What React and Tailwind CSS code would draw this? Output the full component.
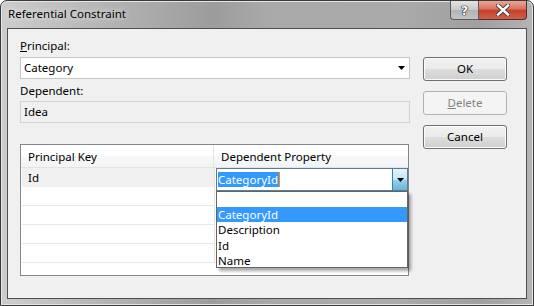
import React from "react";

function Arrow({ className = "" }) {
  return (
    <svg width="7" height="4" viewBox="0 0 7 4" className={className}>
      <path d="M0 0h7L3.5 4z" fill="#000" />
    </svg>
  );
}

function Button({ children, disabled }) {
  return (
    <div
      className={
        disabled
          ? "h-[24px] w-[84px] rounded-[3px] border border-[#adb2b5] bg-[#f4f4f4] text-[#838383] flex items-center justify-center"
          : "h-[24px] w-[84px] rounded-[3px] border border-[#707070] bg-[linear-gradient(to_bottom,#f2f2f2_0%,#ebebeb_48%,#dddddd_52%,#cfcfcf_100%)] flex items-center justify-center shadow-[inset_0_0_0_1px_#fbfbfb]"
      }
    >
      {children}
    </div>
  );
}

export default function App() {
  const rows = [0, 1, 2, 3, 4];
  return (
    <div className="w-[534px] h-[306px] overflow-hidden font-['Noto_Sans',sans-serif] text-[11.5px] leading-[16px] text-black">
      <div className="w-[534px] h-[306px] rounded-t-[7px] border border-[#3a3a3a] bg-[linear-gradient(to_right,#cdcdcd_0%,#b4b4b4_20%,#9c9c9c_40%,#a9a9a9_50%,#aaaaaa_75%,#a0a0a0_90%,#b4b4b4_100%)] flex flex-col shadow-[inset_0_0_0_1px_#e6e6e6]">
        {/* title bar */}
        <div className="h-[27px] flex items-start">
          <div className="pl-[7px] pt-[5px] [text-shadow:0_0_6px_#ffffff]">Referential Constraint</div>
          <div className="ml-auto mr-[6px] flex">
            <div className="w-[29px] h-[19px] rounded-bl-[4px] border border-[#5b5b5b] border-t-0 bg-[linear-gradient(to_bottom,#e3e3e3_0%,#c9c9c9_50%,#b3b3b3_52%,#c4c4c4_100%)] flex items-center justify-center">
              <span className="font-['DejaVu_Sans',sans-serif] font-bold text-[13px] leading-none text-white [text-shadow:0_0_1px_#000,0_0_1px_#000,0_0_1px_#000]">?</span>
            </div>
            <div className="w-[48px] h-[19px] rounded-br-[4px] border border-[#5b2a22] border-t-0 border-l-0 bg-[linear-gradient(to_bottom,#e9a89a_0%,#d9705c_45%,#c4412b_52%,#d0604a_100%)] flex items-center justify-center">
              <svg width="14" height="12" viewBox="0 0 14 12">
                <path d="M2 1.5l10 9M12 1.5l-10 9" stroke="#3b3b3b" strokeWidth="4.2" strokeLinecap="square" />
                <path d="M2 1.5l10 9M12 1.5l-10 9" stroke="#ffffff" strokeWidth="2.4" strokeLinecap="square" />
              </svg>
            </div>
          </div>
        </div>

        {/* client area */}
        <div className="mx-[6px] h-[271px] border border-[#4f4f4f] bg-[#f0f0f0] flex pl-[12px]">
          <div className="w-[390px] flex flex-col pt-[9px]">
            <div>
              <span className="underline">P</span>rincipal:
            </div>
            <div className="mt-[3px] h-[22px] border border-[#c5c5c5] bg-white flex items-center pl-[3px] pr-[4px]">
              <span>Category</span>
              <Arrow className="ml-auto" />
            </div>
            <div className="mt-[4px]">Dependent:</div>
            <div className="mt-[2px] h-[22px] border border-[#d2d2d2] bg-[#f0f0f0] flex items-center pl-[3px]">
              Idea
            </div>

            {/* grid */}
            <div className="relative mt-[21px] w-[389px] h-[132px] border border-[#828790] bg-white">
              <div className="h-[23px] flex border-b border-[#e3e3e3] bg-[linear-gradient(to_bottom,#ffffff_0%,#ffffff_45%,#f6f7f8_55%,#f3f4f5_100%)]">
                <div className="w-[193px] border-r border-[#e5e5e5] pl-[7px] pt-[4px]">Principal Key</div>
                <div className="pl-[7px] pt-[4px]">Dependent Property</div>
              </div>
              {rows.map((r) => (
                <div key={r} className="h-[19px] flex">
                  <div
                    className={
                      r === 0
                        ? "w-[193px] ml-[1px] bg-[#f0f0f0] border-r border-[#e5e5e5] pl-[6px] pt-[2px]"
                        : "w-[193px] ml-[1px] border-b border-[#e8e8e8] border-r border-r-[#e5e5e5]"
                    }
                  >
                    {r === 0 ? "Id" : ""}
                  </div>
                </div>
              ))}

              {/* cell editor */}
              <div className="absolute left-[195px] top-[23px] w-[192px] h-[23px] border border-[#5b7c99] bg-white flex">
                <div className="flex-1 flex items-center pl-[1px]">
                  <span className="bg-[#3399ff] text-white leading-[15px] border-r border-[#ff8a00] pr-[1px]">CategoryId</span>
                </div>
                <div className="w-[15px] border-l border-[#3c7fb1] bg-[linear-gradient(to_bottom,#e5f4fc_0%,#c4e5f6_50%,#98d1ef_52%,#68b3db_100%)] flex items-center justify-center">
                  <Arrow />
                </div>
              </div>

              {/* drop-down list */}
              <div className="absolute left-[195px] top-[46px] w-[192px] h-[77px] border border-[#646464] bg-white shadow-[3px_3px_3px_rgba(0,0,0,0.35)] leading-[15px]">
                <div className="h-[15px]"></div>
                <div className="h-[15px] bg-[#3399ff] text-white pl-[1px] overflow-hidden">CategoryId</div>
                <div className="h-[16px] pl-[1px] overflow-hidden">Description</div>
                <div className="h-[15px] pl-[1px] overflow-hidden">Id</div>
                <div className="h-[15px] pl-[1px] overflow-hidden">Name</div>
              </div>
            </div>
          </div>

          {/* buttons */}
          <div className="ml-[13px] pt-[28px] flex flex-col gap-[10px]">
            <Button>OK</Button>
            <Button disabled>
              <span>
                <span className="underline">D</span>elete
              </span>
            </Button>
            <Button>Cancel</Button>
          </div>
        </div>
      </div>
    </div>
  );
}
